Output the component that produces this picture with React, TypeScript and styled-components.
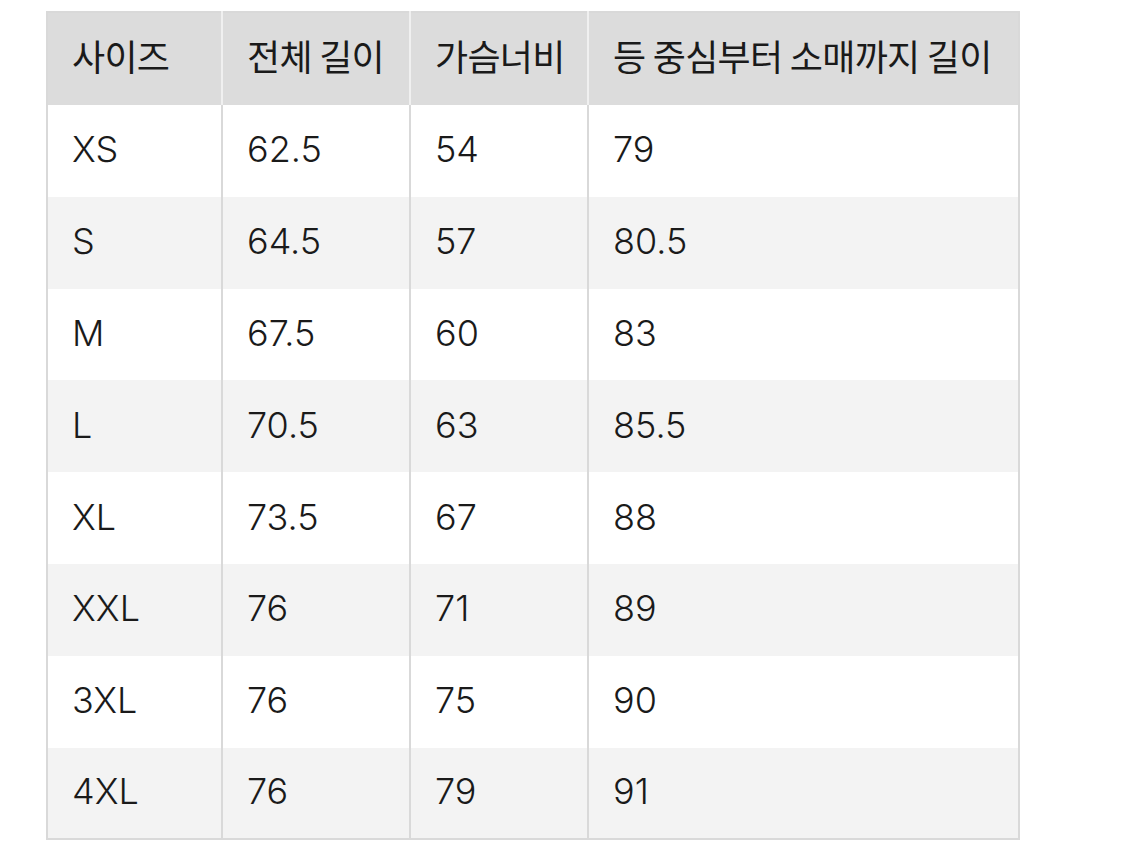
import React from 'react';
import styled, { createGlobalStyle } from 'styled-components';

const GlobalStyle = createGlobalStyle`
  html, body {
    margin: 0;
    padding: 0;
    background: #ffffff;
  }
`;

const Page = styled.div`
  padding: 11px 0 0 46px;
`;

const Table = styled.table`
  border-collapse: collapse;
  width: 974px;
  table-layout: fixed;
  border: 2px solid #d9d9d9;
  color: #1a1a1a;
  font-family: "Inter", "Noto Sans CJK KR", sans-serif;
`;

const HeadCell = styled.th`
  background: #dcdcdc;
  height: 93px;
  padding: 0 0 8px 24px;
  box-sizing: border-box;
  text-align: left;
  font-weight: 400;
  font-size: 36px;
  letter-spacing: -0.7px;
  font-family: "Noto Sans CJK KR", sans-serif;
  border-left: 2px solid #f0f0f0;
  white-space: nowrap;
  &:first-child {
    border-left: none;
  }
`;

const Row = styled.tr<{ $shade: boolean }>`
  background: ${p => (p.$shade ? '#f3f3f3' : '#ffffff')};
`;

const Cell = styled.td`
  height: 91.8px;
  padding: 0 0 3px 24px;
  box-sizing: border-box;
  font-size: 36px;
  font-weight: 300;
  border-left: 2px solid #d9d9d9;
  &:first-child {
    border-left: none;
  }
`;

const columns = ['사이즈', '전체 길이', '가슴너비', '등 중심부터 소매까지 길이'];
const widths = [175, 188, 178, 431];

const rows = [
  ['XS', '62.5', '54', '79'],
  ['S', '64.5', '57', '80.5'],
  ['M', '67.5', '60', '83'],
  ['L', '70.5', '63', '85.5'],
  ['XL', '73.5', '67', '88'],
  ['XXL', '76', '71', '89'],
  ['3XL', '76', '75', '90'],
  ['4XL', '76', '79', '91'],
];

export default function App() {
  return (
    <>
      <GlobalStyle />
      <Page>
        <Table>
          <colgroup>
            {widths.map((w, i) => (
              <col key={i} style={{ width: w }} />
            ))}
          </colgroup>
          <thead>
            <tr>
              {columns.map(c => (
                <HeadCell key={c}>{c}</HeadCell>
              ))}
            </tr>
          </thead>
          <tbody>
            {rows.map((r, i) => (
              <Row key={r[0]} $shade={i % 2 === 1}>
                {r.map((v, j) => (
                  <Cell key={j}>{v}</Cell>
                ))}
              </Row>
            ))}
          </tbody>
        </Table>
      </Page>
    </>
  );
}
